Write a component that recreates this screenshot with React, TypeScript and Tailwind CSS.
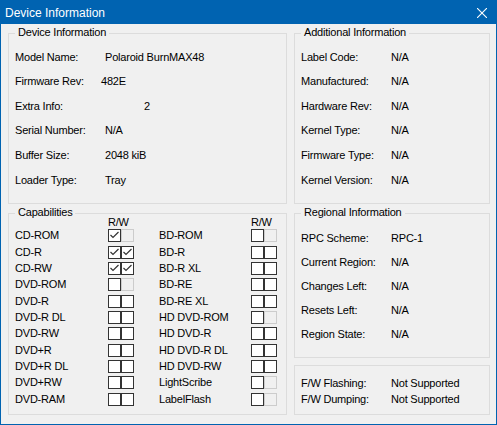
import React from "react";

const Box = ({
  title,
  className = "",
  children,
}: {
  title?: string;
  className?: string;
  children: React.ReactNode;
}) => (
  <div className={`relative border border-[#dcdcdc] ${className}`}>
    {title && (
      <div className="absolute top-[-8px] left-[6px] px-[3px] bg-[#f0f0f0] leading-[13px] whitespace-nowrap">
        {title}
      </div>
    )}
    {children}
  </div>
);

const InfoRow = ({
  label,
  value,
  valueClass = "",
}: {
  label: string;
  value: string;
  valueClass?: string;
}) => (
  <div className="flex h-[13px] leading-[13px] whitespace-nowrap">
    <div className="w-[90px] shrink-0">{label}</div>
    <div className={valueClass}>{value}</div>
  </div>
);

const Check = () => (
  <svg width="11" height="11" viewBox="0 0 11 11" className="block">
    <polyline
      points="1.5,5 4,7.5 9.5,2"
      fill="none"
      stroke="#333333"
      strokeWidth="1.2"
    />
  </svg>
);

const CheckBox = ({ checked, disabled }: { checked?: boolean; disabled?: boolean }) => (
  <div
    className={`w-[13px] h-[13px] border ${
      disabled ? "border-[#cccccc] bg-[#f0f0f0]" : "border-[#333333] bg-white"
    }`}
  >
    {checked && <Check />}
  </div>
);

type Cap = { name: string; r?: boolean; w?: boolean; wDisabled?: boolean };

const leftCaps: Cap[] = [
  { name: "CD-ROM", r: true, wDisabled: true },
  { name: "CD-R", r: true, w: true },
  { name: "CD-RW", r: true, w: true },
  { name: "DVD-ROM", wDisabled: true },
  { name: "DVD-R" },
  { name: "DVD-R DL" },
  { name: "DVD-RW" },
  { name: "DVD+R" },
  { name: "DVD+R DL" },
  { name: "DVD+RW" },
  { name: "DVD-RAM" },
];

const rightCaps: Cap[] = [
  { name: "BD-ROM", wDisabled: true },
  { name: "BD-R" },
  { name: "BD-R XL" },
  { name: "BD-RE" },
  { name: "BD-RE XL" },
  { name: "HD DVD-ROM", wDisabled: true },
  { name: "HD DVD-R" },
  { name: "HD DVD-R DL" },
  { name: "HD DVD-RW" },
  { name: "LightScribe", wDisabled: true },
  { name: "LabelFlash", wDisabled: true },
];

const CapColumn = ({ caps, labelW }: { caps: Cap[]; labelW: string }) => (
  <div className="flex flex-col">
    <div className="flex h-[12px] leading-[13px]">
      <div className={labelW} />
      <div>R/W</div>
    </div>
    {caps.map((c) => (
      <div key={c.name} className="flex items-center h-[16.35px]">
        <div className={`${labelW} shrink-0 leading-[13px] whitespace-nowrap`}>{c.name}</div>
        <CheckBox checked={c.r} />
        <CheckBox checked={c.w} disabled={c.wDisabled} />
      </div>
    ))}
  </div>
);

export default function App() {
  return (
    <div className="w-[497px] h-[425px] border border-[#0063b1] bg-[#f0f0f0] flex flex-col text-black text-[11px] tracking-[-0.2px] font-['Liberation_Sans',Arial,sans-serif] overflow-hidden">
      <div className="h-[23px] shrink-0 bg-[#0063b1] flex items-center justify-between pl-[4px] pr-[9px] text-white text-[12px] tracking-normal">
        <span className="mt-[1px]">Device Information</span>
        <svg width="10" height="10" viewBox="0 0 10 10" className="mt-[1px]">
          <line x1="0" y1="0" x2="10" y2="10" stroke="white" strokeWidth="1.1" />
          <line x1="10" y1="0" x2="0" y2="10" stroke="white" strokeWidth="1.1" />
        </svg>
      </div>
      <div className="flex gap-[7px] pl-[7px] pt-[9px]">
        <div className="w-[279px] flex flex-col gap-[9px]">
          <Box title="Device Information" className="h-[171px]">
            <div className="flex flex-col gap-[11.6px] pt-[16.6px] pl-[6px]">
              <InfoRow label="Model Name:" value="Polaroid BurnMAX48" />
              <InfoRow label="Firmware Rev:" value="482E" valueClass="ml-[-4px]" />
              <InfoRow label="Extra Info:" value="2" valueClass="ml-[39px]" />
              <InfoRow label="Serial Number:" value="N/A" />
              <InfoRow label="Buffer Size:" value="2048 kiB" />
              <InfoRow label="Loader Type:" value="Tray" />
            </div>
          </Box>
          <Box title="Capabilities" className="h-[202px]">
            <div className="flex pt-[1.6px] pl-[6px]">
              <CapColumn caps={leftCaps} labelW="w-[93px]" />
              <div className="w-[25px]" />
              <CapColumn caps={rightCaps} labelW="w-[92px]" />
            </div>
          </Box>
        </div>
        <div className="w-[196px] flex flex-col">
          <Box title="Additional Information" className="h-[171px]">
            <div className="flex flex-col gap-[11.6px] pt-[16.6px] pl-[6px]">
              <InfoRow label="Label Code:" value="N/A" />
              <InfoRow label="Manufactured:" value="N/A" />
              <InfoRow label="Hardware Rev:" value="N/A" />
              <InfoRow label="Kernel Type:" value="N/A" />
              <InfoRow label="Firmware Type:" value="N/A" />
              <InfoRow label="Kernel Version:" value="N/A" />
            </div>
          </Box>
          <Box title="Regional Information" className="h-[145px] mt-[9px]">
            <div className="flex flex-col gap-[11.2px] pt-[17.6px] pl-[6px]">
              <InfoRow label="RPC Scheme:" value="RPC-1" />
              <InfoRow label="Current Region:" value="N/A" />
              <InfoRow label="Changes Left:" value="N/A" />
              <InfoRow label="Resets Left:" value="N/A" />
              <InfoRow label="Region State:" value="N/A" />
            </div>
          </Box>
          <Box className="h-[50px] mt-[7px]">
            <div className="flex flex-col gap-[3.4px] pt-[11px] pl-[6px]">
              <InfoRow label="F/W Flashing:" value="Not Supported" />
              <InfoRow label="F/W Dumping:" value="Not Supported" />
            </div>
          </Box>
        </div>
      </div>
    </div>
  );
}
